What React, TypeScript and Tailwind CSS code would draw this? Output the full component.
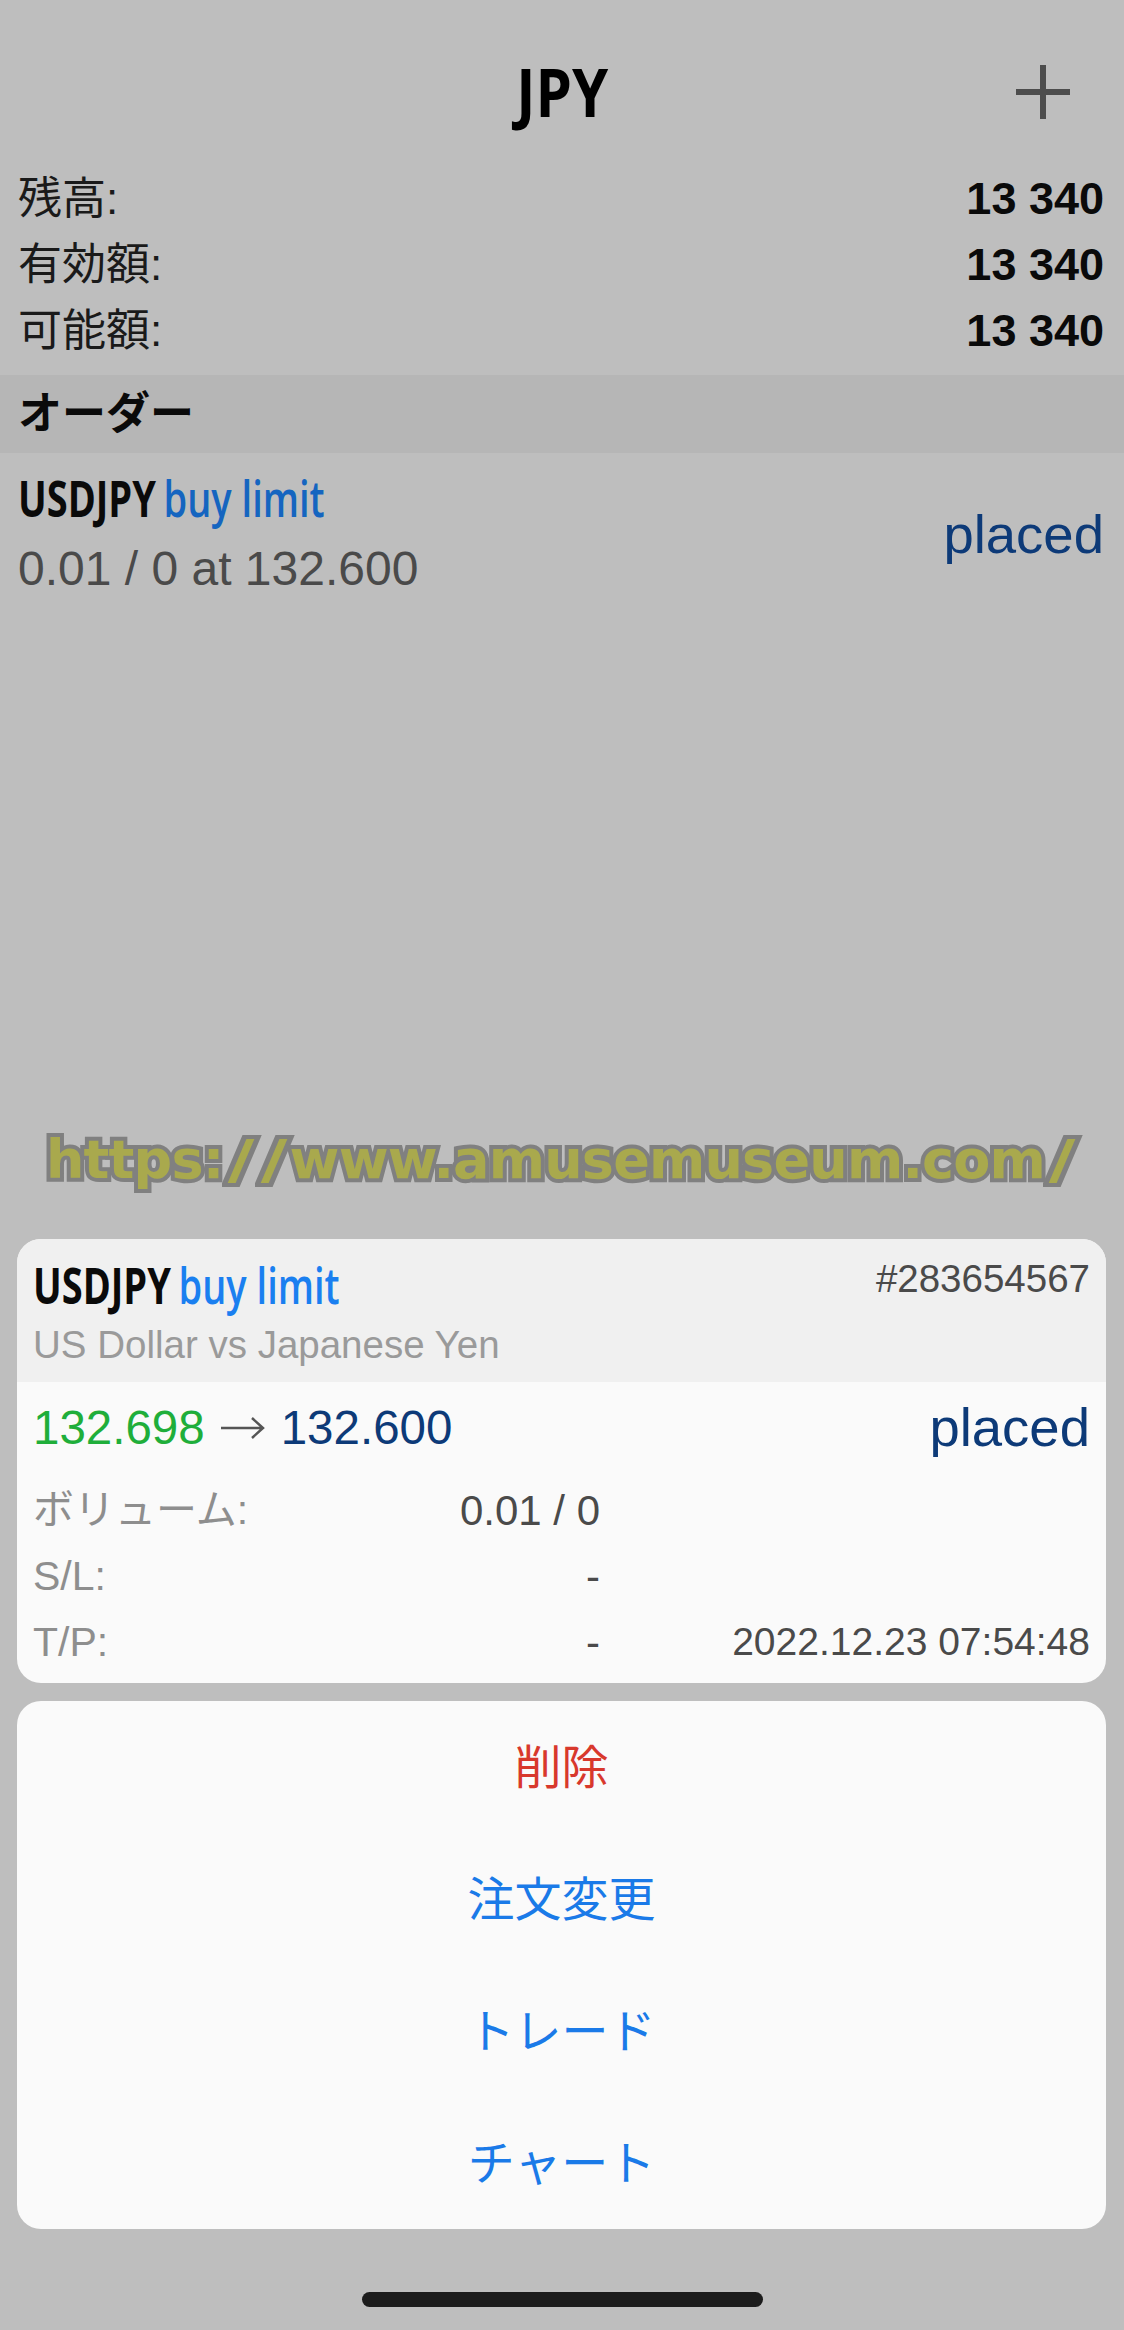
const sans = "font-['Liberation_Sans','Noto_Sans_CJK_JP',sans-serif]";

function Cond({ blue }: { blue: string }) {
  return (
    <span className="inline-block origin-left scale-x-[0.76] whitespace-nowrap font-['Open_Sans',sans-serif] font-bold text-[#0a0a0a]">
      USDJPY<span className={`ml-[10px] font-semibold ${blue}`}>buy limit</span>
    </span>
  );
}

function Summary({ label }: { label: string }) {
  return (
    <div className="flex h-[66px] items-center justify-between pl-[18px] pr-[20px]">
      <span className="text-[44px] text-[#1a1a1a]">{label}</span>
      <span className="text-[45px] font-bold text-[#0a0a0a]">13 340</span>
    </div>
  );
}

function Detail({ label, value, right }: { label: string; value: string; right?: string }) {
  return (
    <div className="flex h-[66px] items-center">
      <span className="mt-[2px] w-[270px] text-[41px] text-[#8e8e8e]">{label}</span>
      <span className="w-[297px] text-right text-[42px] text-[#4a4a4a]">{value}</span>
      {right && <span className="ml-auto text-[39px] text-[#4a4a4a]">{right}</span>}
    </div>
  );
}

function Action({ label, red }: { label: string; red?: boolean }) {
  return (
    <div className={`flex h-[132px] items-center justify-center pt-[2px] text-[47px] ${red ? "text-[#d8382c]" : "text-[#1a7ae8]"}`}>{label}</div>
  );
}

function Slash() {
  return <span className="inline-block w-[33px] scale-x-[1.35] text-center">/</span>;
}

export default function App() {
  return (
    <div className={`flex h-[2330px] w-[1124px] flex-col overflow-hidden bg-[#bebebe] ${sans}`}>
      <header className="relative flex h-[166px] shrink-0 items-center justify-center pt-[16px]">
        <span className="scale-x-[0.88] font-['Open_Sans',sans-serif] text-[66px] font-bold leading-none text-black">JPY</span>
        <svg className="absolute left-[1016px] top-[65px]" width="54" height="54" viewBox="0 0 54 54">
          <path d="M27 0v54M0 27h54" stroke="#4d4d4d" strokeWidth="6" fill="none" />
        </svg>
      </header>
      <div className="shrink-0">
        <Summary label="残高:" />
        <Summary label="有効額:" />
        <Summary label="可能額:" />
      </div>
      <div className="mt-[11px] flex h-[78px] shrink-0 items-center bg-[#b6b6b6] px-[18px] text-[44px] font-bold text-[#0a0a0a]">オーダー</div>
      <div className="flex shrink-0 items-center justify-between pb-[17px] pl-[18px] pr-[20px] pt-[14px]">
        <div>
          <div className="h-[62px] text-[50px] leading-[62px]">
            <Cond blue="text-[#1565c0]" />
          </div>
          <div className="mt-[11px] text-[48px] leading-[58px] text-[#4a4a4a]">0.01 / 0 at 132.600</div>
        </div>
        <span className="pt-[4px] text-[54.5px] text-[#0d3a78]">placed</span>
      </div>
      <div className="flex h-[624px] shrink-0 justify-center pt-[505px]">
        <span className="whitespace-nowrap font-['DejaVu_Sans',sans-serif] text-[54px] font-bold leading-[80px] tracking-[-0.8px] text-[#a9a94d] [-webkit-text-stroke:8px_#808080] [paint-order:stroke_fill]">
          https:<Slash /><Slash />www.amusemuseum.com<Slash />
        </span>
      </div>
      <div className="ml-[17px] mr-[18px] shrink-0 overflow-hidden rounded-[24px] bg-[#fafafa]">
        <div className="flex h-[143px] justify-between bg-[#f0f0f0] px-[16px]">
          <div>
            <div className="h-[84px] pt-[2px] text-[50px] leading-[88px]">
              <Cond blue="text-[#1a7ff0]" />
            </div>
            <div className="text-[38.5px] leading-[44px] text-[#9a9a9a]">US Dollar vs Japanese Yen</div>
          </div>
          <span className="mt-[18px] text-[38.5px] leading-[44px] text-[#4a4a4a]">#283654567</span>
        </div>
        <div className="px-[16px] pb-[8px]">
          <div className="flex h-[95px] items-center justify-between pb-[3px]">
            <span className="flex items-center text-[47.5px]">
              <span className="text-[#1fae3a]">132.698</span>
              <svg className="mx-[16px]" width="44" height="24" viewBox="0 0 44 24">
                <path d="M0 12h42M31 2l11 10-11 10" stroke="#555" strokeWidth="2.5" fill="none" />
              </svg>
              <span className="text-[#0d3a78]">132.600</span>
            </span>
            <span className="text-[54.5px] text-[#0d3a78]">placed</span>
          </div>
          <Detail label="ボリューム:" value="0.01 / 0" />
          <Detail label="S/L:" value="-" />
          <Detail label="T/P:" value="-" right="2022.12.23 07:54:48" />
        </div>
      </div>
      <div className="ml-[17px] mr-[18px] mt-[18px] shrink-0 rounded-[24px] bg-[#fafafa]">
        <Action label="削除" red />
        <Action label="注文変更" />
        <Action label="トレード" />
        <Action label="チャート" />
      </div>
      <div className="mt-[63px] h-[15px] w-[401px] shrink-0 self-center rounded-full bg-[#1c1c1c]" />
    </div>
  );
}
